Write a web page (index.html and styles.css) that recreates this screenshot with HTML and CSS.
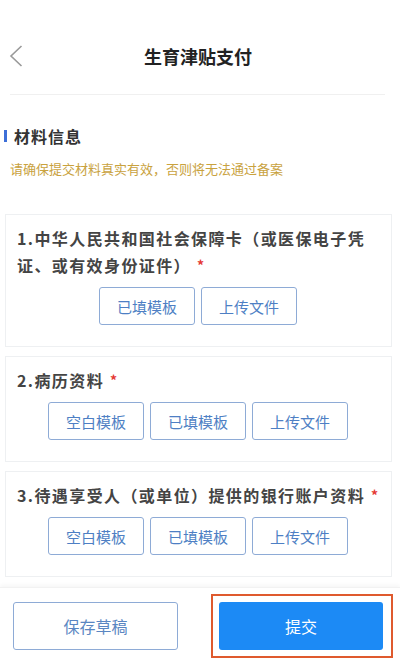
FILE: index.html
```html
<!DOCTYPE html>
<html lang="zh-CN">
<head>
    <meta charset="UTF-8">
    <meta name="viewport" content="width=device-width, initial-scale=1.0">
    <title>生育津贴支付</title>
    <link rel="stylesheet" href="styles.css">
</head>
<body>
    <div class="page">
        <div class="main">
            <!-- 顶部导航 -->
            <div class="nav">
                <span class="back">
                    <svg width="14" height="22" viewBox="0 0 14 22"><polyline points="12.5,1 2,11 12.5,21" fill="none" stroke="#9a9a9a" stroke-width="1.6"/></svg>
                </span>
                <h1 class="nav-title">生育津贴支付</h1>
                <span></span>
            </div>
            <div class="nav-line"></div>

            <h2 class="section-title">材料信息</h2>
            <p class="tip">请确保提交材料真实有效，否则将无法通过备案</p>

            <div class="card">
                <div class="card-title">1.中华人民共和国社会保障卡（或医保电子凭证、或有效身份证件）<span class="star">*</span></div>
                <div class="btn-row">
                    <button class="btn">已填模板</button>
                    <button class="btn">上传文件</button>
                </div>
            </div>

            <div class="card">
                <div class="card-title">2.病历资料<span class="star">*</span></div>
                <div class="btn-row">
                    <button class="btn">空白模板</button>
                    <button class="btn">已填模板</button>
                    <button class="btn">上传文件</button>
                </div>
            </div>

            <div class="card">
                <div class="card-title">3.待遇享受人（或单位）提供的银行账户资料<span class="star">*</span></div>
                <div class="btn-row">
                    <button class="btn">空白模板</button>
                    <button class="btn">已填模板</button>
                    <button class="btn">上传文件</button>
                </div>
            </div>
        </div>

        <!-- 底部按钮 -->
        <div class="footer">
            <button class="btn-draft">保存草稿</button>
            <div class="mark">
                <button class="btn-submit">提交</button>
            </div>
        </div>
    </div>
</body>
</html>
```

FILE: styles.css
```css
body {
    margin: 0;
    font-family: "Noto Sans CJK SC", "Noto Sans", sans-serif;
    background-color: #fff;
    color: #333;
}
.page {
    height: 666px;
    display: flex;
    flex-direction: column;
}
.main {
    flex: 1;
    overflow: hidden;
}
.nav {
    margin-top: 31px;
    height: 50px;
    display: grid;
    grid-template-columns: 36px 1fr 40px;
    align-items: center;
}
.back {
    padding-left: 9px;
    display: flex;
}
.nav-title {
    margin: 0;
    text-align: center;
    font-size: 18px;
    font-weight: 700;
    color: #222;
}
.nav-line {
    margin: 13px 15px 0 10px;
    border-top: 1px solid #f0f0f0;
}
.section-title {
    margin: 31px 0 0 4px;
    height: 20px;
    display: flex;
    align-items: center;
    font-size: 16px;
    font-weight: 700;
    letter-spacing: 1px;
    color: #333;
}
.section-title::before {
    content: "";
    width: 3px;
    height: 12px;
    background-color: #3d6fd8;
    margin-right: 7px;
}
.tip {
    margin: 14px 0 0 10px;
    line-height: 18px;
    font-size: 13px;
    color: #c9a23e;
}
.card {
    margin: 0 8px 9px 5px;
    border: 1px solid #eef0f2;
    padding: 10px 12px 21px 11px;
}
.tip + .card {
    margin-top: 36px;
}
.card-title {
    font-size: 16px;
    line-height: 27px;
    font-weight: 700;
    letter-spacing: 1.4px;
    color: #444;
}
.star {
    color: #e53935;
    font-size: 14px;
    line-height: 1;
    letter-spacing: 0;
    margin-left: 6px;
    vertical-align: 1px;
}
.btn-row {
    margin-top: 8px;
    display: flex;
    justify-content: center;
    gap: 6px;
}
.btn {
    width: 96px;
    height: 38px;
    border: 1px solid #8eabd6;
    border-radius: 3px;
    background-color: #fff;
    color: #4e7fc4;
    font-family: inherit;
    font-size: 15px;
    padding: 0;
}
.footer {
    border-top: 1px solid #f2f2f2;
    box-shadow: 0 -2px 4px rgba(0, 0, 0, 0.04);
    padding: 6px 7px 8px 13px;
    display: flex;
    justify-content: space-between;
    align-items: center;
}
.btn-draft {
    width: 165px;
    height: 48px;
    border: 1px solid #8eabd6;
    border-radius: 3px;
    background-color: #fff;
    color: #5a86c2;
    font-family: inherit;
    font-size: 16px;
}
.mark {
    border: 2px solid #df5a2e;
    padding: 6px 8px 6px 6px;
}
.btn-submit {
    display: block;
    width: 164px;
    height: 48px;
    border: none;
    border-radius: 3px;
    background-color: #1c8af5;
    color: #fff;
    font-family: inherit;
    font-size: 16px;
}
```
